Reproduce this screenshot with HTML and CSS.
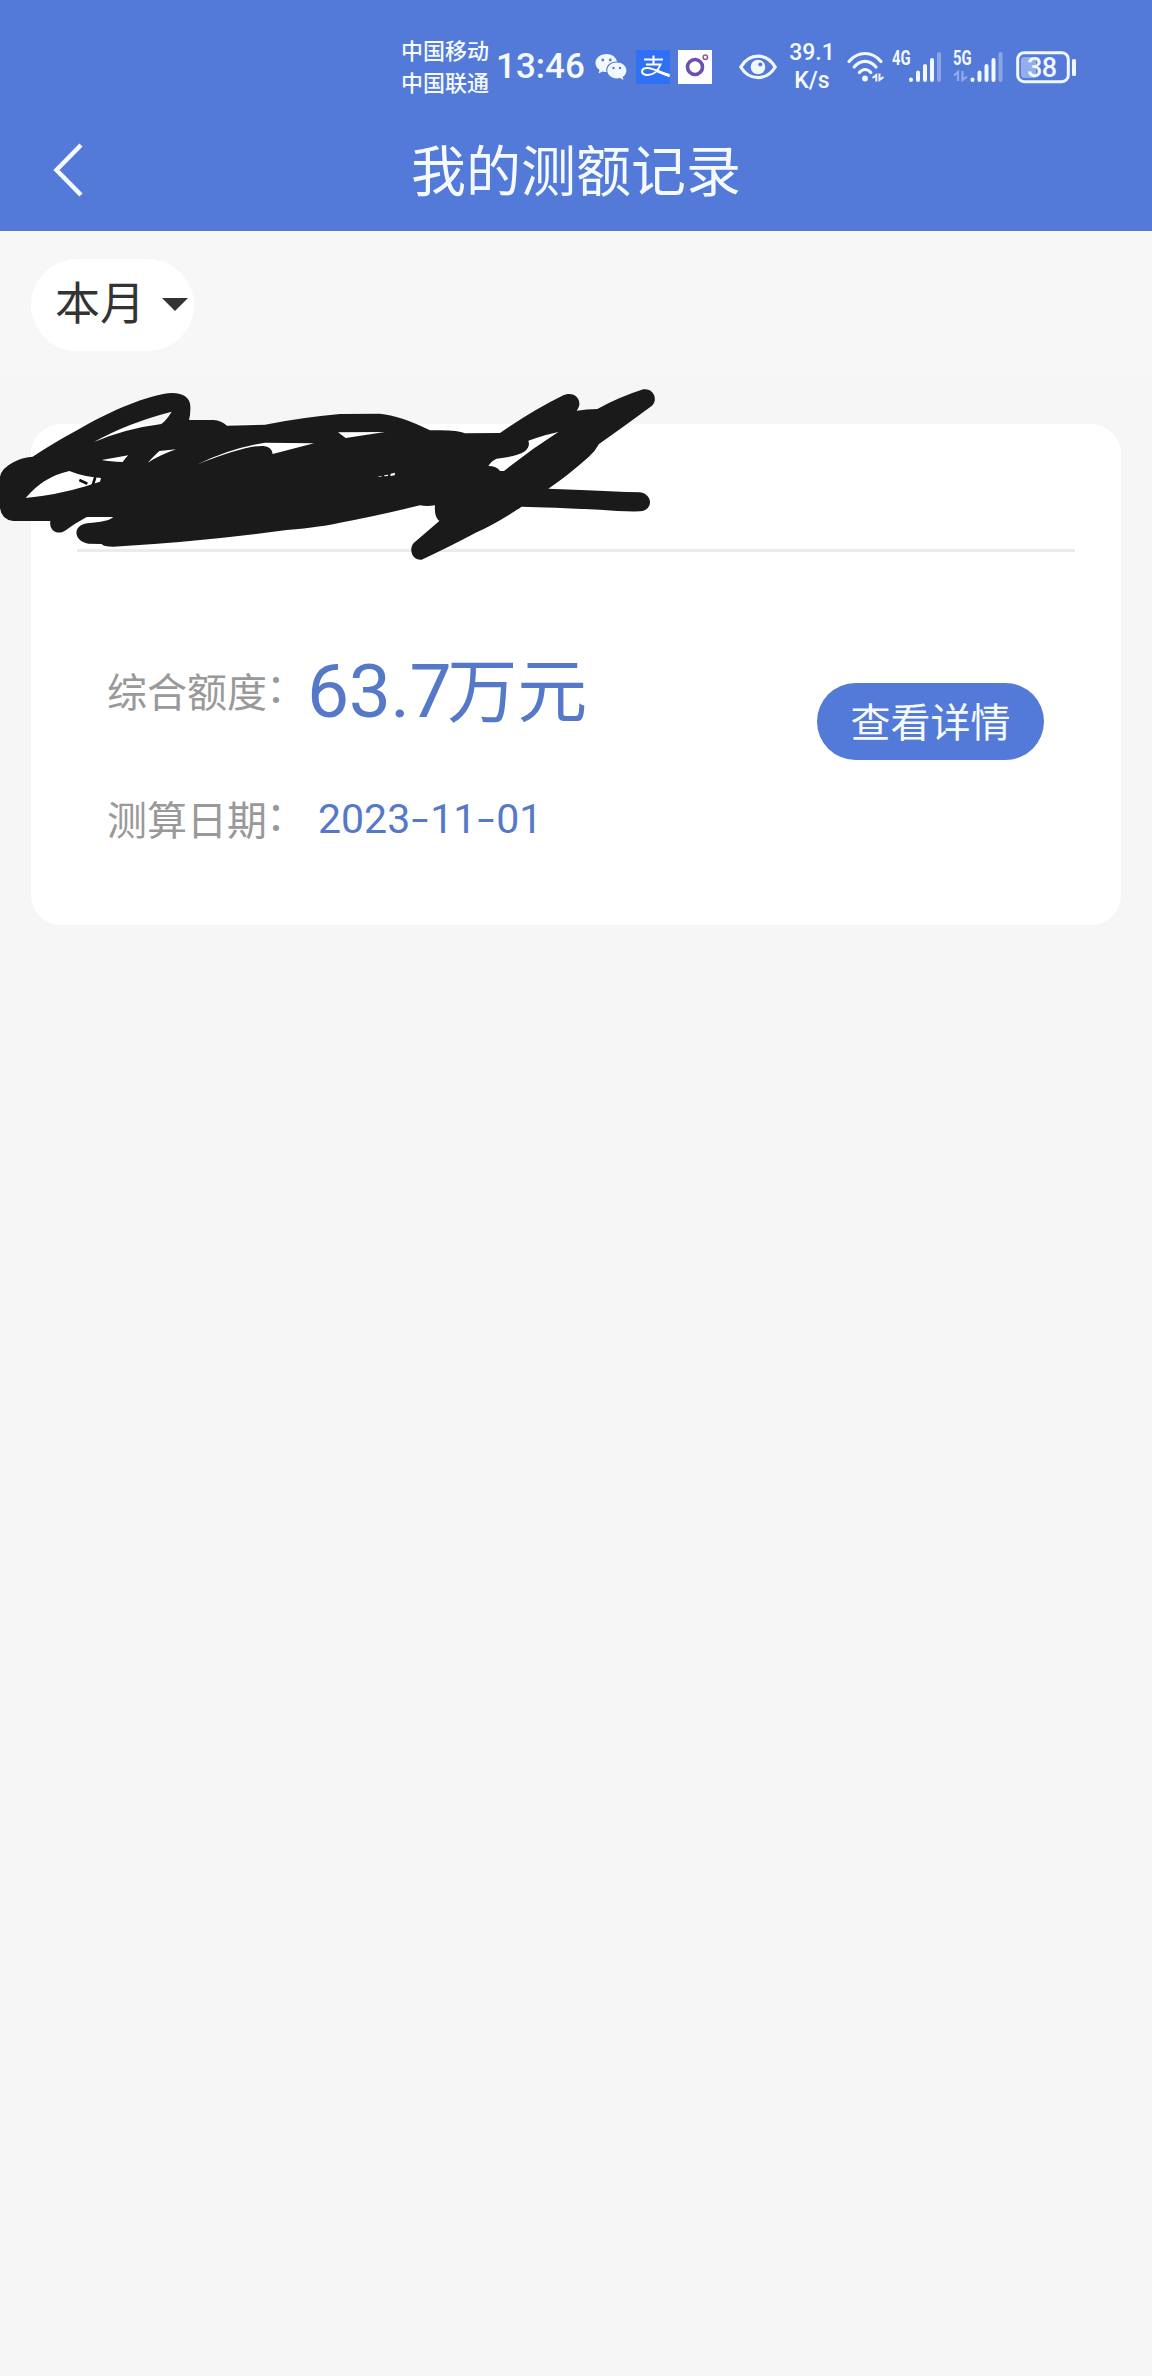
FILE: index.html
```html
<!DOCTYPE html>
<html lang="zh-CN">
<head>
  <meta charset="UTF-8">
  <meta name="viewport" content="width=device-width, initial-scale=1.0">
  <title>我的测额记录</title>
  <link rel="stylesheet" href="styles.css">
</head>
<body>
  <div class="header">
    <div class="status">
      <div class="carrier">
        <div>中国移动</div>
        <div>中国联通</div>
      </div>
      <div class="time">13:46</div>
      <svg class="wechat" width="32" height="28" viewBox="0 0 32 28">
        <path fill="#f1f8ff" d="M11.500 1C5.200 1 .5 5 .5 10c0 3 1.500 5.300 4 7l-1 3.500 4-2c1.200.4 2.600.6 4 .6-1.500-6 3.500-10.600 10.500-10.600C21 4 16.800 1 11.500 1z"/>
        <path fill="#f1f8ff" d="M21.800 9.600c-5.300 0-9.500 3.500-9.500 7.900s4.200 7.900 9.500 7.900c1.200 0 2.300-.2 3.300-.5l3.400 2-.9-3c2.300-1.500 3.800-3.700 3.800-6.400 0-4.400-4.300-7.900-9.600-7.900z"/>
        <g fill="#5379d9"><circle cx="7.800" cy="7" r="1.400"/><circle cx="15.300" cy="7" r="1.400"/><circle cx="18.500" cy="15" r="1.200"/><circle cx="25" cy="15" r="1.200"/></g>
      </svg>
      <svg class="alipay" width="34" height="34" viewBox="0 0 34 34">
        <rect width="34" height="34" fill="#2f70f5"/>
        <path fill="none" stroke="#fff" stroke-width="2" d="M8 9.500h19M17.500 5.500v9M10 14.500h14.500c-2 5-5.500 10.500-13 10.500-7.500-.2-7-7 0-7 5 0 11 3.500 22 8"/>
        <path fill="none" stroke="#fff" stroke-width="3" d="M20 20.500c4 1.800 8 3.400 13.500 5"/>
      </svg>
      <svg class="camera" width="34" height="34" viewBox="0 0 34 34">
        <rect width="34" height="34" fill="#fff"/>
        <circle cx="17" cy="17" r="7.500" fill="none" stroke="#6b50b0" stroke-width="3.600"/>
        <circle cx="27.300" cy="7.200" r="2.200" fill="none" stroke="#8a5aa6" stroke-width="1.500"/>
      </svg>
      <svg class="eye" width="38" height="26" viewBox="0 0 38 26">
        <path fill="none" stroke="#f1f8ff" stroke-width="3.200" d="M1.800 13C6 6 12 2.200 19 2.200S32 6 36.200 13C32 20 26 23.600 19 23.600S6 20 1.800 13z"/>
        <circle cx="19" cy="13" r="7.300" fill="#f1f8ff"/>
        <circle cx="21.300" cy="10.500" r="2" fill="#5379d9"/>
      </svg>
      <div class="speed">
        <div>39.1</div>
        <div>K/s</div>
      </div>
      <svg class="wifi" width="37" height="32" viewBox="0 0 37 32">
        <g fill="none" stroke="#f1f8ff" stroke-width="3.200" stroke-linecap="round">
          <path d="M2 10.500C11-.2 25-.2 34 10.500"/>
          <path d="M7.200 16C13.500 8.500 22.500 8.500 29 16"/>
          <path d="M12.400 21.500c3.500-4 8-4 11.400 0"/>
        </g>
        <circle cx="18" cy="27.500" r="2.900" fill="#f1f8ff"/>
        <path fill="none" stroke="#f1f8ff" stroke-width="2" d="M25.500 27l3.800-3v6.500M32.500 22.500V29l4-3"/>
      </svg>
      <div class="net">4G</div>
      <svg class="signal" width="34" height="34" viewBox="0 0 34 34">
        <g stroke="#f1f8ff" stroke-width="4" stroke-linecap="round">
          <path d="M3 29.500v.5M10 22.500V30M17 16v14M24 10v20"/>
          <path d="M31 4v26" opacity=".35"/>
        </g>
      </svg>
      <div class="net net5">5G</div>
      <svg class="signal signal5" width="51" height="34" viewBox="0 0 51 34">
        <path fill="none" stroke="#f1f8ff" stroke-width="2.200" opacity=".4" d="M1 25.500l4-3.500v9M9.500 21v9l4.500-3.500"/>
        <g stroke="#f1f8ff" stroke-width="4" stroke-linecap="round">
          <path d="M19.500 29.500v.5M26.500 22.500V30M33.500 16v14M40.500 10v20"/>
          <path d="M47.500 4v26" opacity=".35"/>
        </g>
      </svg>
      <svg class="battery" width="61" height="34" viewBox="0 0 61 34">
        <rect x="1.700" y="2.700" width="50.600" height="29" rx="6.500" fill="none" stroke="#f1f8ff" stroke-width="3"/>
        <path fill="#f1f8ff" opacity=".42" d="M8 7h12v21H8a3 3 0 0 1-3-3V10a3 3 0 0 1 3-3z"/>
        <rect x="56" y="9" width="4" height="17" rx="1.500" fill="#f1f8ff"/>
        <text class="level" x="11" y="26.500" textLength="30">38</text>
      </svg>
    </div>
    <div class="nav">
      <svg class="back" width="30" height="54" viewBox="0 0 30 54">
        <path fill="none" stroke="#f4faff" stroke-width="4.500" d="M28 2L3.500 27 28 52"/>
      </svg>
      <div class="title">我的测额记录</div>
    </div>
  </div>

  <div class="filter">
    <div class="month">本月<span class="arrow"></span></div>
  </div>

  <div class="card">
    <div class="card-top"></div>
    <div class="card-body">
      <div class="info">
        <div class="row">
          <span class="label">综合额度<i>：</i></span>
          <span class="amount"><span class="num">63.7</span>万元</span>
        </div>
        <div class="row">
          <span class="label">测算日期<i>：</i></span>
          <span class="date">2023<i>-</i>11<i>-</i>01</span>
        </div>
      </div>
      <button type="button" class="btn">查看详情</button>
    </div>
    <!-- 涂抹遮挡 -->
    <svg class="scribble" width="680" height="190" viewBox="0 0 2040 570">
      <path fill="#1a1a1a" fill-rule="evenodd" d="M0 290Q5 265 40 247Q60 234 98 230Q180 178 220 157C300 110 400 60 490 42C540 32 572 50 571 80Q572 100 567 120L640 120Q665 122 681 137L795 134Q900 113 1020 102L1140 101Q1200 106 1290 151Q1370 148 1395 160L1500 159Q1600 90 1690 46C1725 32 1745 60 1736 82L1730 92Q1760 87 1792 87Q1860 50 1930 28C1962 24 1975 60 1955 78Q1860 148 1797 192Q1785 215 1765 232Q1700 290 1645 326Q1760 330 1880 336L1920 337C1960 343 1960 392 1920 394Q1860 395 1800 389Q1650 382 1565 380Q1490 430 1430 457Q1340 505 1265 539C1235 541 1225 505 1242 488L1318 423Q1302 410 1305 376Q1280 380 1260 376Q1120 410 1020 428Q970 440 860 450Q600 485 340 500Q310 500 305 492L265 491C220 485 216 435 262 430Q310 425 325 420Q335 416 340 411L260 411Q225 430 195 452C175 466 146 454 151 423L40 423Q5 420 0 385Z
        M282 186Q380 130 515 95Q500 120 484 132Q380 145 282 186Z
        M305 240L385 226Q375 235 368 246Q330 245 305 240Z
        M443 248Q465 225 478 213L528 208Q480 225 443 248Z
        M590 254Q690 205 795 188L942 190L818 222Q815 200 790 198Q740 195 590 254Z
        M77 354Q130 290 208 273Q250 290 303 294L300 305Q280 310 260 318Q170 345 77 354Z
        M1014 157L1155 156L1037 174Z
        M1465 258Q1475 242 1490 236Q1600 225 1585 182Q1640 163 1675 156Q1590 210 1512 273L1500 273Q1490 258 1465 258Z
        M1132 291l12-4v3zM1152 286l12-2v4l-10 1zM1172 281l13-3-1 8-13 2z"/>
      <path fill="none" stroke="#111" stroke-width="8" d="M238 300l24 11M286 291l-8 25"/>
    </svg>
  </div>
</body>
</html>
```
FILE: styles.css
```css
* {
  box-sizing: border-box;
}
body {
  margin: 0;
  min-height: 2376px;
  background: #f6f6f6;
  font-family: "Noto Sans CJK SC", sans-serif;
}
svg {
  display: block;
  flex-shrink: 0;
  overflow: visible;
}
.header {
  height: 231px;
  background: #5379d9;
  color: #f4faff;
}
.status {
  height: 110px;
  padding: 23px 0 0 401px;
  display: flex;
  align-items: center;
}
.carrier {
  width: 89px;
  margin-top: -4px;
  font-size: 22px;
  font-weight: 500;
  line-height: 32px;
  white-space: nowrap;
}
.time {
  width: 90px;
  margin-left: 6px;
  font-family: Roboto, sans-serif;
  font-size: 35px;
  font-weight: 500;
  line-height: 40px;
  white-space: nowrap;
}
.wechat {
  margin-left: 9px;
}
.alipay {
  margin-left: 9px;
}
.camera {
  margin-left: 8px;
}
.eye {
  margin-left: 27px;
}
.speed {
  width: 50px;
  margin-left: 10px;
  font-family: Roboto, sans-serif;
  font-size: 23px;
  font-weight: 500;
  line-height: 28px;
  text-align: center;
}
.wifi {
  margin-left: 10px;
}
.net {
  width: 18px;
  margin: -17px 0 0 8px;
  color: #f1f8ff;
  font-family: Roboto, sans-serif;
  font-size: 20px;
  font-weight: 700;
  line-height: 24px;
  transform: scaleX(.74);
  transform-origin: left;
}
.signal {
  margin-left: -2px;
}
.net5 {
  margin-left: 11px;
}
.signal5 {
  margin-left: -18px;
}
.battery {
  margin-left: 12px;
}
.level {
  fill: #f1f8ff;
  font-family: Roboto, sans-serif;
  font-size: 27px;
  font-weight: 500;
}
.nav {
  height: 121px;
  padding: 0 53px;
  display: grid;
  grid-template-columns: 30px 1fr 30px;
}
.back {
  margin-top: 33px;
}
.title {
  font-size: 55px;
  line-height: 114px;
  text-align: center;
}
.filter {
  height: 145px;
  padding: 28px 31px;
  background: #f7f7f7;
}
.month {
  width: 163px;
  height: 92px;
  padding: 0 0 8px 24px;
  display: flex;
  align-items: center;
  border-radius: 46px;
  background: #fff;
  color: #333;
  font-size: 45px;
  line-height: 84px;
}
.arrow {
  margin: 6px 0 0 17px;
  border: 13px solid transparent;
  border-top-color: #333;
  border-bottom: 0;
}
.card {
  position: relative;
  height: 501px;
  margin: 48px 31px 0;
  padding: 0 46px;
  border-radius: 30px;
  background: #fff;
}
.card-top {
  height: 128px;
  border-bottom: 3px solid #ebebeb;
}
.card-body {
  padding: 74px 30px 0;
  display: flex;
  justify-content: space-between;
}
.info {
  display: flex;
  flex-direction: column;
}
.row {
  height: 128px;
  display: flex;
  align-items: flex-start;
  color: #5578c8;
  line-height: 128px;
  white-space: nowrap;
}
.label {
  color: #999;
  font-size: 40px;
}
.label i {
  display: inline-block;
  font-style: normal;
  transform: translate(-1px, -5px);
}
.amount {
  margin-top: -3px;
  font-size: 70px;
}
.num {
  margin-right: -4px;
  font-family: Roboto, sans-serif;
  font-size: 75px;
  letter-spacing: -.5px;
}
.date {
  margin: 1px 0 0 11px;
  font-family: Roboto, sans-serif;
  font-size: 41px;
}
.date i {
  display: inline-block;
  width: 20px;
  font-style: normal;
  text-align: center;
  transform: scaleX(1.5);
}
.btn {
  width: 227px;
  height: 77px;
  margin: 57px 1px 0 0;
  padding: 0 0 3px;
  border: 0;
  border-radius: 39px;
  background: #5379d9;
  color: #f4faff;
  font-family: inherit;
  font-size: 40px;
}
.scribble {
  position: absolute;
  left: -31px;
  top: -44px;
}
```
